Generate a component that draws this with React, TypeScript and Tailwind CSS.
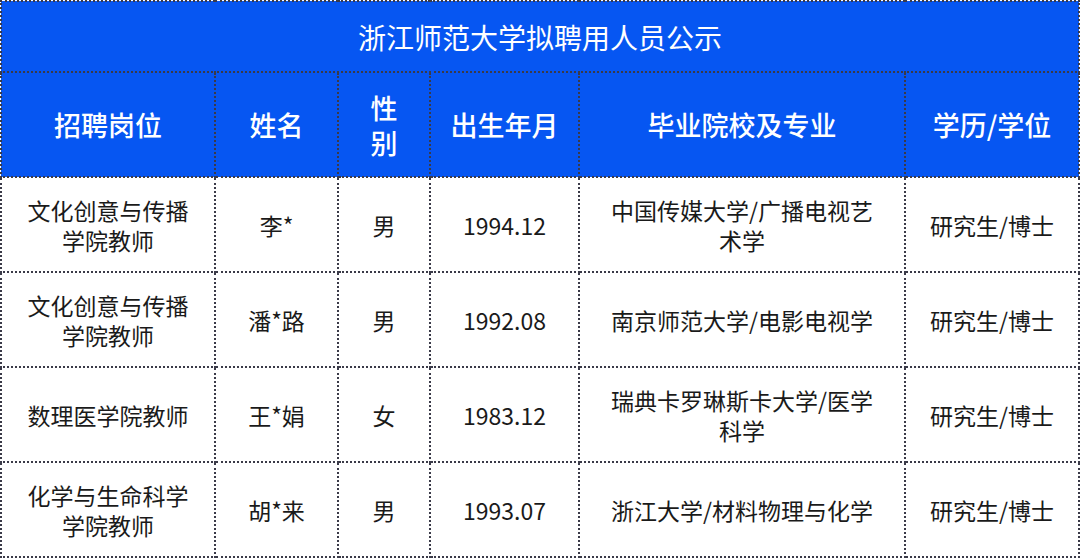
import React from "react";

const rows = [
  ["文化创意与传播学院教师", "李*", "男", "1994.12", "中国传媒大学/广播电视艺术学", "研究生/博士"],
  ["文化创意与传播学院教师", "潘*路", "男", "1992.08", "南京师范大学/电影电视学", "研究生/博士"],
  ["数理医学院教师", "王*娟", "女", "1983.12", "瑞典卡罗琳斯卡大学/医学科学", "研究生/博士"],
  ["化学与生命科学学院教师", "胡*来", "男", "1993.07", "浙江大学/材料物理与化学", "研究生/博士"],
];

const bd = "border-2 border-dotted border-[#3a3a48]";

export default function App() {
  return (
    <div
      className="w-[1080px] h-[559px] bg-white overflow-hidden"
      style={{ fontFamily: '"Noto Sans CJK SC", "Noto Sans", sans-serif' }}
    >
      <table className="table-fixed border-collapse w-[1078px]">
        <colgroup>
          <col className="w-[214px]" />
          <col className="w-[123px]" />
          <col className="w-[92px]" />
          <col className="w-[149px]" />
          <col className="w-[326px]" />
          <col className="w-[174px]" />
        </colgroup>
        <thead>
          <tr className="h-[71px] bg-[#0656f2]">
            <th colSpan={6} className={`${bd} text-white text-[28px] font-normal leading-[34px]`}>
              浙江师范大学拟聘用人员公示
            </th>
          </tr>
          <tr className="h-[105px] bg-[#0656f2] text-white text-[27px] leading-[35px]">
            <th className={`${bd} font-medium`}>招聘岗位</th>
            <th className={`${bd} font-medium`}>姓名</th>
            <th className={`${bd} font-medium`}>
              <div>性</div>
              <div>别</div>
            </th>
            <th className={`${bd} font-medium`}>出生年月</th>
            <th className={`${bd} font-medium`}>毕业院校及专业</th>
            <th className={`${bd} font-medium`}>学历/学位</th>
          </tr>
        </thead>
        <tbody>
          {rows.map((r, i) => (
            <tr key={i} className="h-[95px] text-[#1a1a1a] text-[23px] leading-[30px]">
              <td className={`${bd} px-[16px] text-center`}>{r[0]}</td>
              <td className={`${bd} text-center`}>{r[1]}</td>
              <td className={`${bd} text-center`}>{r[2]}</td>
              <td className={`${bd} text-center`}>{r[3]}</td>
              <td className={`${bd} px-[20px] text-center`}>{r[4]}</td>
              <td className={`${bd} text-center`}>{r[5]}</td>
            </tr>
          ))}
        </tbody>
      </table>
    </div>
  );
}
